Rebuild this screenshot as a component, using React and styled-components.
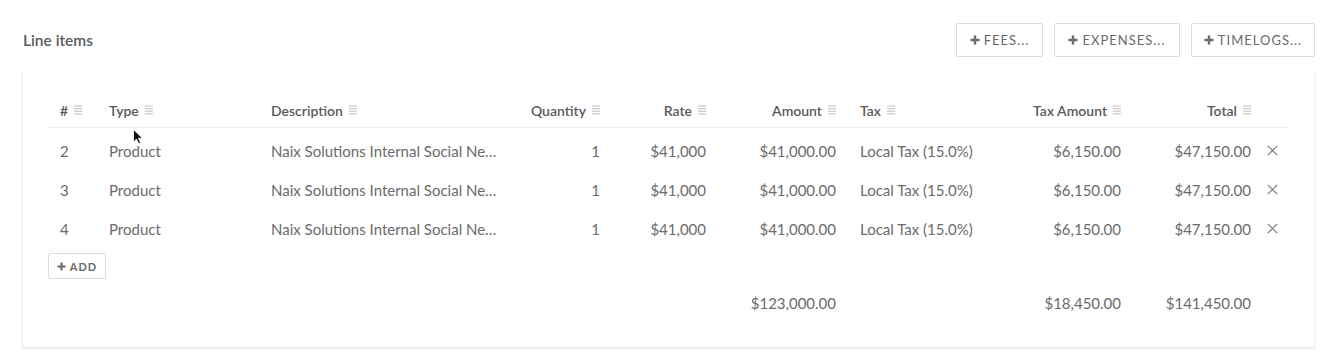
import React from "react";
import styled, { createGlobalStyle } from "styled-components";

const Global = createGlobalStyle`
  html, body { margin: 0; padding: 0; background: #fff; }
  body { font-family: Lato, "Open Sans", sans-serif; color: #666; -webkit-font-smoothing: antialiased; }
`;

const Page = styled.div`
  padding: 23px 19px 16px 22px;
`;

const TopBar = styled.div`
  display: flex;
  align-items: center;
  justify-content: space-between;
  height: 34px;
`;

const Title = styled.h2`
  margin: 0 0 0 1px;
  font-size: 15.5px;
  font-weight: 600;
  color: #5a5a5a;
`;

const Actions = styled.div`
  display: flex;
  gap: 11px;
`;

const Button = styled.button`
  display: inline-flex;
  align-items: center;
  justify-content: center;
  gap: 4px;
  height: ${(p) => (p.$small ? "26px" : "34px")};
  width: ${(p) => p.$w}px;
  padding: 0;
  border: 1px solid #dcdcdc;
  border-radius: 2px;
  background: #fff;
  color: #6a6a6a;
  font-family: inherit;
  font-size: ${(p) => (p.$small ? "11px" : "13px")};
  font-weight: ${(p) => (p.$small ? 700 : 400)};
  letter-spacing: 1px;
  text-transform: uppercase;
  cursor: pointer;
`;

const Card = styled.div`
  margin-top: 13px;
  background: #fff;
  border-left: 1px solid #f0f0f0;
  border-right: 1px solid #f0f0f0;
  box-shadow: 0 2px 2px rgba(0, 0, 0, 0.09);
  padding: 23px 25px 25px 25px;
`;

const cols = "49px 162px 251px 102px 106px 130px 152px 133px 130px 27px";

const Row = styled.div`
  display: grid;
  grid-template-columns: ${cols};
  align-items: center;
  height: ${(p) => p.$h || 39}px;
  border-bottom: ${(p) => (p.$head ? "1px solid #ececec" : "none")};
  margin-bottom: ${(p) => (p.$head ? "3px" : "0")};
`;

const Cell = styled.div`
  padding: 0 12px;
  font-size: ${(p) => (p.$head ? "14px" : "15px")};
  color: ${(p) => (p.$head ? "#5a5a5a" : "#6b6b6b")};
  font-weight: ${(p) => (p.$head ? 600 : 400)};
  text-align: ${(p) => (p.$right ? "right" : "left")};
  white-space: nowrap;
  overflow: hidden;
  text-overflow: ellipsis;
  display: ${(p) => (p.$head ? "flex" : "block")};
  align-items: center;
  justify-content: ${(p) => (p.$right ? "flex-end" : "flex-start")};
  gap: 6px;
`;

const DescCell = styled(Cell)`
  padding-right: 10px;
`;

const Remove = styled.div`
  display: flex;
  align-items: center;
  justify-content: flex-start;
  padding-left: 4px;
  color: #777;
`;

const AddWrap = styled.div`
  margin-top: 5px;
`;

const TotalsRow = styled(Row)`
  margin-top: 5px;
  height: 38px;
`;

const CursorWrap = styled.div`
  position: absolute;
  left: 133px;
  top: 129px;
  pointer-events: none;
`;

const Frame = styled.div`
  position: relative;
`;

const SortIcon = () => (
  <svg width="8" height="10" viewBox="0 0 8 10">
    {[1, 3.6, 6.2, 8.8].map((y) => (
      <line key={y} x1="0" x2="8" y1={y} y2={y} stroke="#c8c8c8" strokeWidth="1.2" />
    ))}
  </svg>
);

const Plus = ({ s = 10 }) => (
  <svg width={s} height={s} viewBox="0 0 10 10">
    <path d="M5 0.5v9M0.5 5h9" stroke="#6a6a6a" strokeWidth="2.4" />
  </svg>
);

const XIcon = () => (
  <svg width="11" height="11" viewBox="0 0 11 11">
    <path d="M0.8 0.8l9.4 9.4M10.2 0.8l-9.4 9.4" stroke="#777" strokeWidth="1.2" />
  </svg>
);

const Cursor = () => (
  <svg width="10" height="16" viewBox="0 0 10 16">
    <path d="M0.5 0.5v12.5l3-3 2 4.5 2-1-2-4.3h4z" fill="#111" stroke="#fff" strokeWidth="0.8" />
  </svg>
);

const headers = [
  ["#", false],
  ["Type", false],
  ["Description", false],
  ["Quantity", true],
  ["Rate", true],
  ["Amount", true],
  ["Tax", false],
  ["Tax Amount", true],
  ["Total", true],
];

const items = [
  { n: 2, type: "Product", desc: "Naix Solutions Internal Social Network Platform", qty: 1, rate: "$41,000", amount: "$41,000.00", tax: "Local Tax (15.0%)", taxAmt: "$6,150.00", total: "$47,150.00" },
  { n: 3, type: "Product", desc: "Naix Solutions Internal Social Network Platform", qty: 1, rate: "$41,000", amount: "$41,000.00", tax: "Local Tax (15.0%)", taxAmt: "$6,150.00", total: "$47,150.00" },
  { n: 4, type: "Product", desc: "Naix Solutions Internal Social Network Platform", qty: 1, rate: "$41,000", amount: "$41,000.00", tax: "Local Tax (15.0%)", taxAmt: "$6,150.00", total: "$47,150.00" },
];

export default function App() {
  return (
    <Frame>
      <Global />
      <Page>
        <TopBar>
          <Title>Line items</Title>
          <Actions>
            <Button $w={87}><Plus />FEES...</Button>
            <Button $w={126}><Plus />EXPENSES...</Button>
            <Button $w={124}><Plus />TIMELOGS...</Button>
          </Actions>
        </TopBar>
        <Card>
          <Row $head $h={34}>
            {headers.map(([label, right]) => (
              <Cell key={label} $head $right={right}>
                {label}
                <SortIcon />
              </Cell>
            ))}
            <div />
          </Row>
          {items.map((it) => (
            <Row key={it.n}>
              <Cell>{it.n}</Cell>
              <Cell>{it.type}</Cell>
              <DescCell title={it.desc}>{it.desc}</DescCell>
              <Cell $right>{it.qty}</Cell>
              <Cell $right>{it.rate}</Cell>
              <Cell $right>{it.amount}</Cell>
              <Cell>{it.tax}</Cell>
              <Cell $right>{it.taxAmt}</Cell>
              <Cell $right>{it.total}</Cell>
              <Remove><XIcon /></Remove>
            </Row>
          ))}
          <AddWrap>
            <Button $small $w={58}><Plus s={9} />ADD</Button>
          </AddWrap>
          <TotalsRow>
            <div /><div /><div /><div /><div />
            <Cell $right>$123,000.00</Cell>
            <div />
            <Cell $right>$18,450.00</Cell>
            <Cell $right>$141,450.00</Cell>
            <div />
          </TotalsRow>
        </Card>
      </Page>
      <CursorWrap><Cursor /></CursorWrap>
    </Frame>
  );
}
